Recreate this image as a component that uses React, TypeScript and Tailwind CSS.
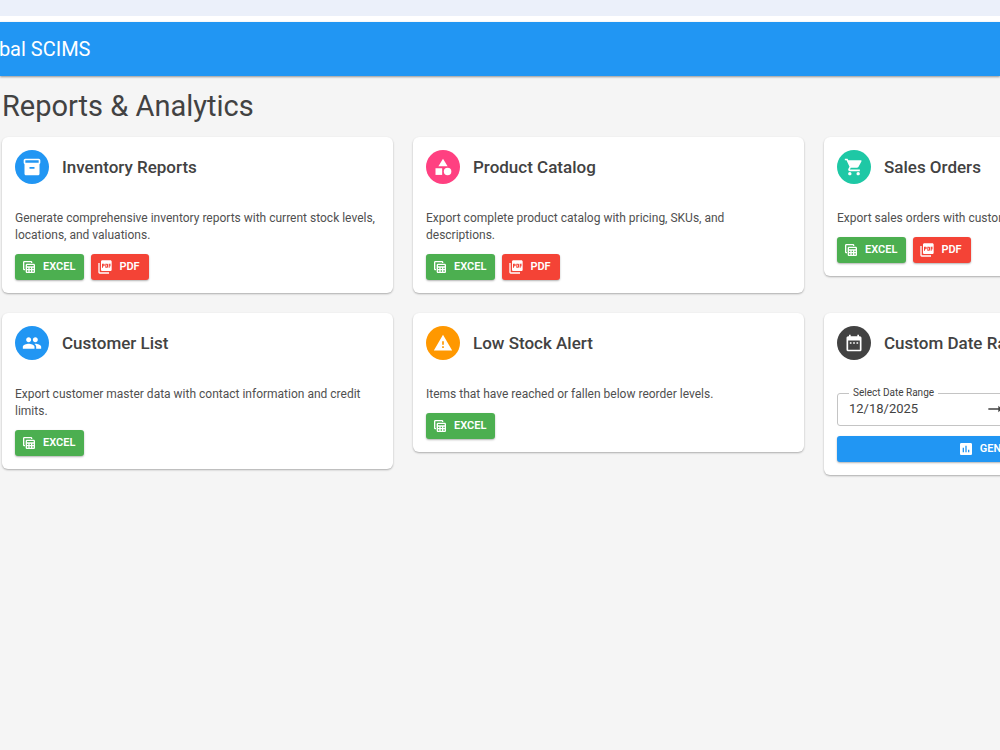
import React, { useState } from 'react';
import {
    MdArrowRightAlt,
    MdAssessment,
    MdCategory,
    MdDateRange,
    MdEvent,
    MdInventory2,
    MdPeople,
    MdPictureAsPdf,
    MdShoppingCart,
    MdTableView,
    MdWarning,
} from 'react-icons/md';

type Format = 'excel' | 'pdf';

interface Report {
    id: string;
    title: string;
    description: string;
    icon: React.ReactNode;
    color: string;
    formats: Format[];
}

const reports: Report[] = [
    {
        id: 'inventory',
        title: 'Inventory Reports',
        description: 'Generate comprehensive inventory reports with current stock levels, locations, and valuations.',
        icon: <MdInventory2 size={20} />,
        color: 'bg-[#2196f3]',
        formats: ['excel', 'pdf'],
    },
    {
        id: 'catalog',
        title: 'Product Catalog',
        description: 'Export complete product catalog with pricing, SKUs, and descriptions.',
        icon: <MdCategory size={20} />,
        color: 'bg-[#ff4081]',
        formats: ['excel', 'pdf'],
    },
    {
        id: 'sales',
        title: 'Sales Orders',
        description: 'Export sales orders with customer details and order totals.',
        icon: <MdShoppingCart size={20} />,
        color: 'bg-[#1ec8a5]',
        formats: ['excel', 'pdf'],
    },
    {
        id: 'customers',
        title: 'Customer List',
        description: 'Export customer master data with contact information and credit limits.',
        icon: <MdPeople size={20} />,
        color: 'bg-[#2196f3]',
        formats: ['excel'],
    },
    {
        id: 'low-stock',
        title: 'Low Stock Alert',
        description: 'Items that have reached or fallen below reorder levels.',
        icon: <MdWarning size={20} />,
        color: 'bg-[#ff9800]',
        formats: ['excel'],
    },
];

const buttonBase =
    'flex h-[26px] items-center gap-1.5 rounded-[3px] pl-1.5 pr-[9px] text-[11px] font-semibold uppercase text-white shadow-[0_1px_2px_rgba(0,0,0,0.3)]';

const ExportButton: React.FC<{ format: Format }> = ({ format }) => {
    if (format === 'pdf') {
        return (
            <button type="button" className={`${buttonBase} bg-[#f44336]`}>
                <MdPictureAsPdf size={16} />
                PDF
            </button>
        );
    }
    return (
        <button type="button" className={`${buttonBase} bg-[#4caf50]`}>
            <MdTableView size={16} />
            Excel
        </button>
    );
};

interface CardProps {
    title: string;
    icon: React.ReactNode;
    color: string;
    children: React.ReactNode;
}

const Card: React.FC<CardProps> = ({ title, icon, color, children }) => (
    <section className="rounded-md bg-white shadow-[0_1px_2px_rgba(0,0,0,0.3)]">
        <div className="flex items-center gap-[13px] p-[13px]">
            <span className={`flex size-[34px] shrink-0 items-center justify-center rounded-full text-white ${color}`}>
                {icon}
            </span>
            <h2 className="text-[17px] leading-6 font-medium whitespace-nowrap">{title}</h2>
        </div>
        <div className="p-[13px]">{children}</div>
    </section>
);

const DateRangeCard: React.FC = () => {
    const [start, setStart] = useState('12/18/2025');
    const [end, setEnd] = useState('01/18/2026');

    return (
        <Card title="Custom Date Range Report" icon={<MdDateRange size={20} />} color="bg-[#424242]">
            <fieldset className="mb-[10px] rounded-[3px] border border-[#c4c4c4] pr-2 pb-[7px] pl-[11px]">
                <legend className="px-1 text-[10px] leading-[14px]">Select Date Range</legend>
                <div className="flex h-[18px] items-center text-[13px]">
                    <input
                        type="text"
                        aria-label="Start date"
                        value={start}
                        onChange={(e) => setStart(e.target.value)}
                        className="w-0 flex-1 outline-none"
                    />
                    <MdArrowRightAlt size={20} className="mx-2 shrink-0" />
                    <input
                        type="text"
                        aria-label="End date"
                        value={end}
                        onChange={(e) => setEnd(e.target.value)}
                        className="w-0 flex-1 outline-none"
                    />
                    <button type="button" aria-label="Open calendar" className="ml-5 px-1.5">
                        <MdEvent size={20} />
                    </button>
                </div>
            </fieldset>
            <button type="button" className={`${buttonBase} w-full justify-center bg-[#2196f3]`}>
                <MdAssessment size={16} />
                Generate Report
            </button>
        </Card>
    );
};

export default function App() {
    return (
        <div className="min-h-screen overflow-hidden bg-[#f5f5f5] font-[Roboto,'Liberation_Sans',sans-serif] text-[#424242]">
            <div className="h-[22px] border-b-[6px] border-white bg-[#ebf0fa]" />
            <header className="flex h-[54px] items-center bg-[#2196f3] shadow-[0_1px_2px_rgba(0,0,0,0.4)]">
                <span className="-ml-[31px] text-xl whitespace-nowrap text-white">Global SCIMS</span>
            </header>
            <main className="pt-[13px] pl-0.5">
                <h1 className="mb-[14px] text-[29px] leading-[34px]">Reports &amp; Analytics</h1>
                {/* the third column runs past the right edge of the window */}
                <div className="grid w-[calc(100%+215px)] grid-cols-3 items-start gap-5">
                    {reports.map((report) => (
                        <Card key={report.id} title={report.title} icon={report.icon} color={report.color}>
                            <p className="mb-[10px] text-xs leading-[17px] text-[#505050]">{report.description}</p>
                            <div className="flex gap-[7px]">
                                {report.formats.map((format) => (
                                    <ExportButton key={format} format={format} />
                                ))}
                            </div>
                        </Card>
                    ))}
                    <DateRangeCard />
                </div>
            </main>
        </div>
    );
}
